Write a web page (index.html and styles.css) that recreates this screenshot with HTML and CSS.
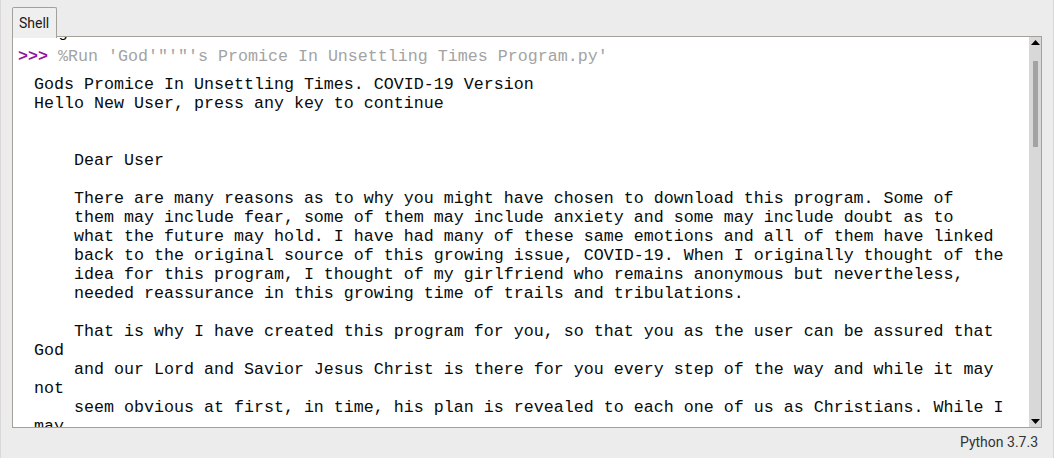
FILE: index.html
```html
<!DOCTYPE html>
<html>
<head>
<meta charset="utf-8">
<link rel="stylesheet" href="styles.css">
</head>
<body>
<div class="app">
  <div class="tabs">
    <div class="tab">Shell</div>
  </div>
  <div class="panel">
    <div class="text">
      <pre class="prev">    g</pre>
      <pre class="prompt"><span class="ps">&gt;&gt;&gt;</span> <span class="cmd">%Run 'God'"'"'s Promice In Unsettling Times Program.py'</span></pre>
      <pre class="out">Gods Promice In Unsettling Times. COVID-19 Version
Hello New User, press any key to continue


    Dear User

    There are many reasons as to why you might have chosen to download this program. Some of
    them may include fear, some of them may include anxiety and some may include doubt as to
    what the future may hold. I have had many of these same emotions and all of them have linked
    back to the original source of this growing issue, COVID-19. When I originally thought of the
    idea for this program, I thought of my girlfriend who remains anonymous but nevertheless,
    needed reassurance in this growing time of trails and tribulations.

    That is why I have created this program for you, so that you as the user can be assured that
God
    and our Lord and Savior Jesus Christ is there for you every step of the way and while it may
not
    seem obvious at first, in time, his plan is revealed to each one of us as Christians. While I
may</pre>
    </div>
    <div class="scrollbar">
      <div class="arrow up"><svg width="9" height="5" viewBox="0 0 9 5"><polygon points="0,5 9,5 4.5,0" fill="#000"/></svg></div>
      <div class="thumb"></div>
      <div class="trough-rest"></div>
      <div class="arrow down"><svg width="9" height="5" viewBox="0 0 9 5"><polygon points="0,0 9,0 4.5,5" fill="#000"/></svg></div>
    </div>
  </div>
  <div class="status">Python 3.7.3</div>
</div>
</body>
</html>
```

FILE: styles.css
```css
html, body {
  margin: 0;
  padding: 0;
  background: #ececec;
}

.app {
  width: 1054px;
  height: 458px;
  box-sizing: border-box;
  padding: 7px 11px 0 11px;
  background: #ececec;
  border-left: 1px solid #d9d9d9;
  border-right: 1px solid #d9d9d9;
  display: flex;
  flex-direction: column;
  overflow: hidden;
  font-family: Roboto, "Liberation Sans", sans-serif;
}

.tabs {
  display: flex;
  height: 30px;
  margin-bottom: -1px;
  position: relative;
  z-index: 1;
}

.tab {
  box-sizing: border-box;
  width: 45px;
  height: 31px;
  border: 1px solid #a4a19b;
  border-bottom: none;
  border-radius: 2px 2px 0 0;
  background: #efefef;
  padding-left: 6px;
  font-size: 14px;
  line-height: 30px;
  color: #1a1a1a;
}

.panel {
  box-sizing: border-box;
  height: 392px;
  border: 1px solid #a4a19b;
  background: #ffffff;
  display: flex;
}

.text {
  flex: 1;
  overflow: hidden;
  padding-left: 5px;
}

.text pre {
  margin: 0;
  font-family: "Liberation Mono", monospace;
  font-size: 16.667px;
  line-height: 19px;
  white-space: pre;
  color: #000;
}

.text .prev {
  margin-top: -14px;
}

.text .prompt {
  margin-top: 5px;
}

.ps {
  color: #94189b;
  font-weight: bold;
}

.cmd {
  color: #a3a3a3;
}

.text .out {
  margin-top: 9px;
  margin-left: 16px;
  color: #0a0a0a;
}

.scrollbar {
  width: 12px;
  background: #d8d8d8;
  display: flex;
  flex-direction: column;
  align-items: center;
}

.arrow {
  display: flex;
  justify-content: center;
}

.arrow svg {
  display: block;
}

.arrow.up {
  padding-top: 3px;
  height: 9px;
}

.thumb {
  width: 5px;
  height: 86px;
  margin-top: 12px;
  background: #a3a3a3;
}

.trough-rest {
  flex: 1;
}

.arrow.down {
  padding-bottom: 3px;
  align-items: flex-end;
  height: 9px;
}

.status {
  height: 29px;
  line-height: 29px;
  text-align: right;
  padding-right: 4px;
  font-size: 14px;
  color: #333333;
}
```
